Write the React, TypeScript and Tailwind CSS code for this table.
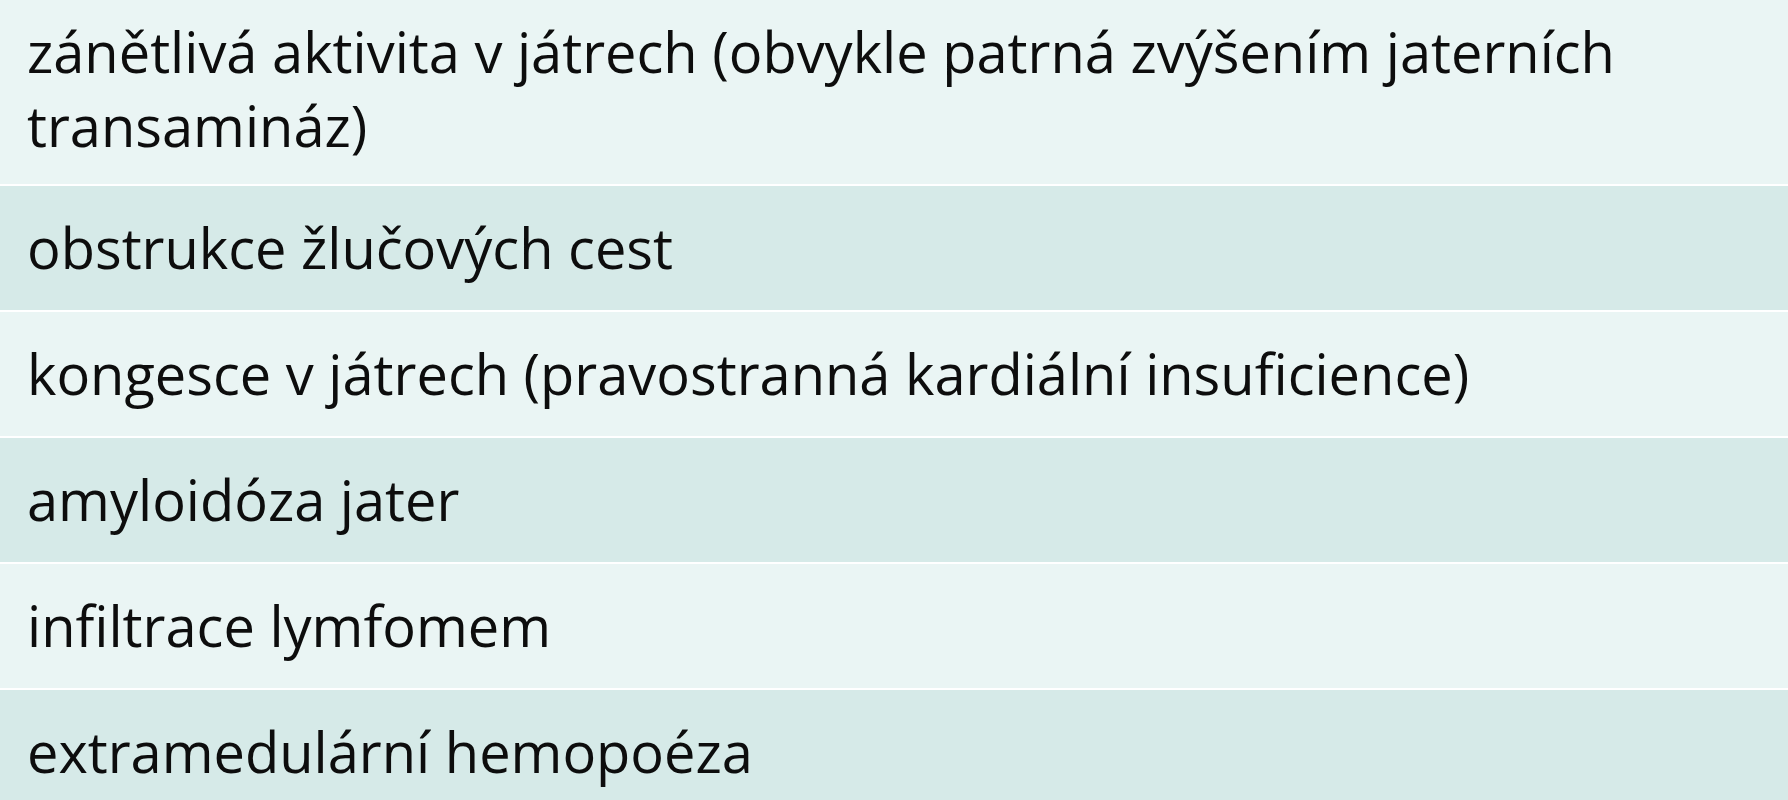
const rows = [
  "zánětlivá aktivita v játrech (obvykle patrná zvýšením jaterních transamináz)",
  "obstrukce žlučových cest",
  "kongesce v játrech (pravostranná kardiální insuficience)",
  "amyloidóza jater",
  "infiltrace lymfomem",
  "extramedulární hemopoéza",
];

export default function App() {
  return (
    <div className="h-[800px] w-[1788px] overflow-hidden bg-white font-['Open_Sans',sans-serif] text-[56px] leading-[74px] text-[#0d0d0d]">
      {rows.map((text, i) => (
        <div
          key={i}
          className={`border-b-2 border-white pl-[27px] pr-[40px] ${i === 0 ? "pt-[14px] pb-[22px]" : "pt-[24px] pb-[26px]"} ${
            i % 2 === 0 ? "bg-[#eaf5f4]" : "bg-[#d6eae8]"
          }`}
        >
          {text}
        </div>
      ))}
    </div>
  );
}
